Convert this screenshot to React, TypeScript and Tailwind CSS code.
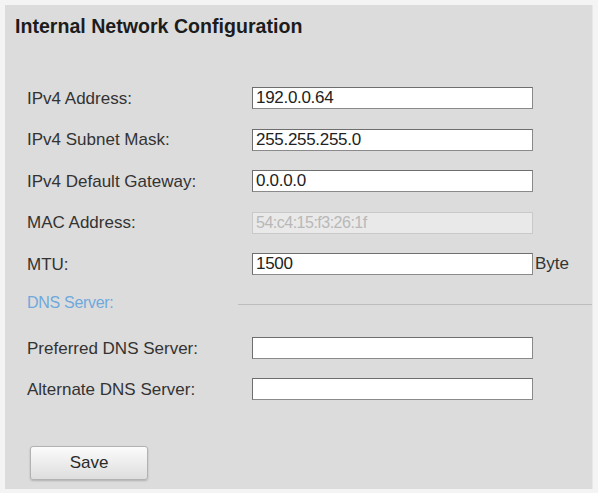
import React from 'react';

const fields = [
  { label: 'IPv4 Address:', value: '192.0.0.64' },
  { label: 'IPv4 Subnet Mask:', value: '255.255.255.0' },
  { label: 'IPv4 Default Gateway:', value: '0.0.0.0' },
  { label: 'MAC Address:', value: '54:c4:15:f3:26:1f', disabled: true },
  { label: 'MTU:', value: '1500', unit: 'Byte' },
];

const dnsFields = [
  { label: 'Preferred DNS Server:', value: '' },
  { label: 'Alternate DNS Server:', value: '' },
];

function Row({ label, value, disabled, unit }: { label: string; value: string; disabled?: boolean; unit?: string }) {
  return (
    <div className="flex items-center h-[22px]">
      <span className="w-[225px] shrink-0 text-[17px] leading-none text-[#333]">{label}</span>
      <div
        className={
          disabled
            ? 'w-[281px] h-[22px] flex items-center pl-[3px] bg-[#e9e9e9] border border-[#c9c9c9] text-[#b8b8b8] text-[16px] tracking-[-0.5px]'
            : 'w-[281px] h-[22px] flex items-center pl-[3px] bg-white border border-[#8a8a8a] border-t-[#6e6e6e] border-l-[#6e6e6e] text-[#222] text-[17px] tracking-[-0.3px]'
        }
      >
        {value}
      </div>
      {unit && <span className="ml-[2px] text-[17px] text-[#333]">{unit}</span>}
    </div>
  );
}

export default function App() {
  return (
    <div className="w-[598px] h-[493px] bg-[#f4f4f4] pt-[5px] pl-[5px] pr-[5px] pb-[4px]" style={{ fontFamily: '"Liberation Sans", Arial, sans-serif' }}>
      <div className="h-full bg-[#dcdcdc] border-r border-[#e8e8e8] flex flex-col">
        <h1 className="pl-[10px] pt-[10px] text-[19.6px] leading-[22px] font-bold text-[#1c1c1c]">
          Internal Network Configuration
        </h1>
        <div className="pl-[22px] pt-[50px] flex flex-col gap-[19.5px]">
          {fields.map((f) => (
            <Row key={f.label} {...f} />
          ))}
        </div>
        <div className="pl-[22px] mt-[17px] flex items-center h-[22px]">
          <span className="w-[211px] shrink-0 text-[16px] leading-none text-[#6fa9dc] tracking-[-0.3px]">DNS Server:</span>
          <div className="flex-1 h-px bg-[#bdbdbd] mt-[3px]" />
        </div>
        <div className="pl-[22px] mt-[23px] flex flex-col gap-[19px]">
          {dnsFields.map((f) => (
            <Row key={f.label} {...f} />
          ))}
        </div>
        <div className="pl-[25px] mt-[46px]">
          <button className="w-[118px] h-[34px] rounded-[3px] border border-[#b2b2b2] bg-gradient-to-b from-[#fbfbfb] to-[#dedede] shadow-[0_1px_2px_rgba(0,0,0,0.2)] text-[17px] text-[#2a2a2a]">
            Save
          </button>
        </div>
      </div>
    </div>
  );
}
